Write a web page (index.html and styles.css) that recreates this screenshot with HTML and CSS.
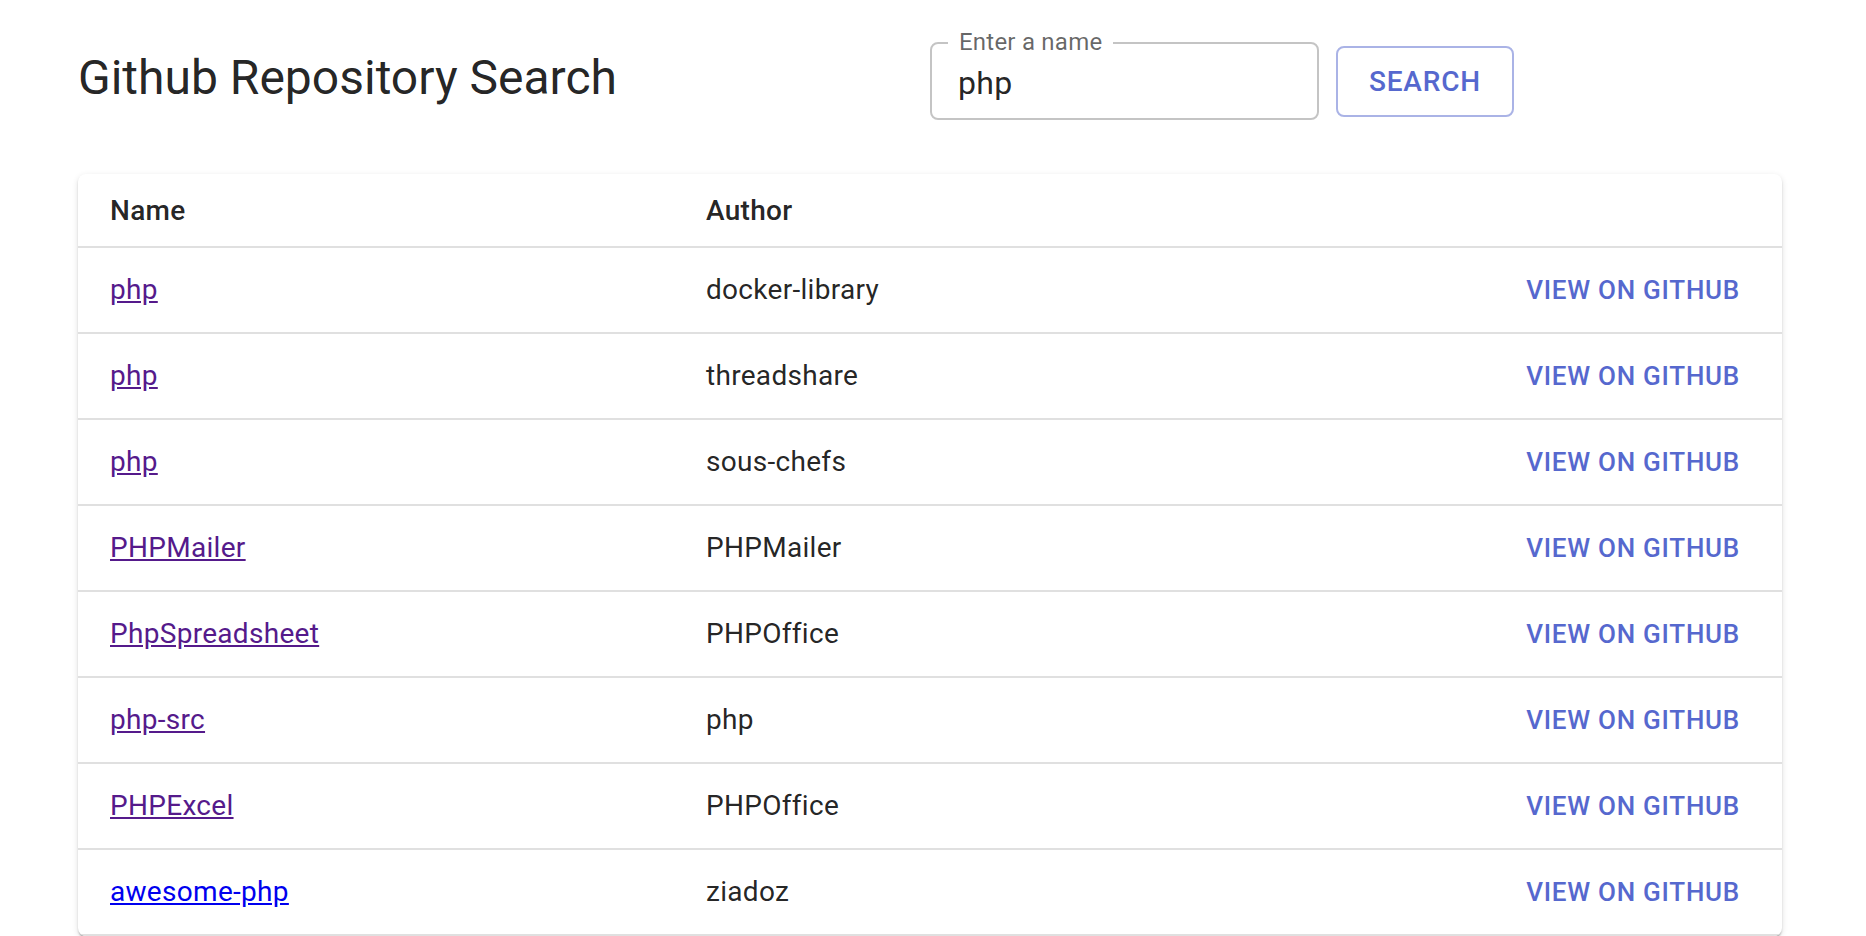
FILE: index.html
```html
<!DOCTYPE html>
<html lang="en">
<head>
<meta charset="utf-8">
<title>Github Repository Search</title>
<link rel="stylesheet" href="styles.css">
</head>
<body>
<div class="page">
  <header class="top">
    <h1 class="title">Github Repository Search</h1>
    <form class="search" onsubmit="return false">
      <div class="field">
        <label class="field-label" for="q">Enter a name</label>
        <input id="q" class="field-input" type="text" value="php">
      </div>
      <button class="btn-outlined" type="submit">Search</button>
    </form>
  </header>

  <div class="card">
    <table class="repo-table">
      <thead>
        <tr>
          <th class="col-name">Name</th>
          <th class="col-author">Author</th>
          <th class="col-action"></th>
        </tr>
      </thead>
      <tbody>
        <tr>
          <td><a class="link visited" href="#">php</a></td>
          <td>docker-library</td>
          <td class="col-action"><button class="btn-text">View on Github</button></td>
        </tr>
        <tr>
          <td><a class="link visited" href="#">php</a></td>
          <td>threadshare</td>
          <td class="col-action"><button class="btn-text">View on Github</button></td>
        </tr>
        <tr>
          <td><a class="link visited" href="#">php</a></td>
          <td>sous-chefs</td>
          <td class="col-action"><button class="btn-text">View on Github</button></td>
        </tr>
        <tr>
          <td><a class="link visited" href="#">PHPMailer</a></td>
          <td>PHPMailer</td>
          <td class="col-action"><button class="btn-text">View on Github</button></td>
        </tr>
        <tr>
          <td><a class="link visited" href="#">PhpSpreadsheet</a></td>
          <td>PHPOffice</td>
          <td class="col-action"><button class="btn-text">View on Github</button></td>
        </tr>
        <tr>
          <td><a class="link visited" href="#">php-src</a></td>
          <td>php</td>
          <td class="col-action"><button class="btn-text">View on Github</button></td>
        </tr>
        <tr>
          <td><a class="link visited" href="#">PHPExcel</a></td>
          <td>PHPOffice</td>
          <td class="col-action"><button class="btn-text">View on Github</button></td>
        </tr>
        <tr>
          <td><a class="link fresh" href="#">awesome-php</a></td>
          <td>ziadoz</td>
          <td class="col-action"><button class="btn-text">View on Github</button></td>
        </tr>
      </tbody>
    </table>
  </div>
</div>
</body>
</html>
```

FILE: styles.css
```css
html, body {
  margin: 0;
  padding: 0;
  background: #ffffff;
}

body {
  font-family: Roboto, "Helvetica", "Arial", sans-serif;
  color: rgba(0, 0, 0, 0.87);
}

.page {
  padding-left: 78px;
  width: 1704px;
}

.top {
  display: grid;
  grid-template-columns: 852px 852px;
  align-items: center;
  margin-top: 42px;
  height: 78px;
}

.title {
  margin: 0 0 6px 0;
  font-size: 48px;
  font-weight: 400;
  line-height: 1.334;
  letter-spacing: 0;
  color: rgba(0, 0, 0, 0.87);
}

.search {
  display: flex;
  align-items: center;
  gap: 17px;
  margin: 0;
}

.field {
  position: relative;
  box-sizing: border-box;
  width: 389px;
  height: 78px;
  border: 2px solid rgba(0, 0, 0, 0.23);
  border-radius: 8px;
  display: flex;
  align-items: center;
}

.field-label {
  position: absolute;
  left: 16px;
  top: -14px;
  padding: 0 11px;
  background: #ffffff;
  font-size: 24px;
  line-height: 24px;
  color: rgba(0, 0, 0, 0.6);
  letter-spacing: 0.00938em;
}

.field-input {
  box-sizing: border-box;
  width: 100%;
  height: 100%;
  border: 0;
  outline: none;
  background: transparent;
  padding: 4px 26px 0 26px;
  font-family: Roboto, "Helvetica", "Arial", sans-serif;
  font-size: 32px;
  color: rgba(0, 0, 0, 0.87);
  letter-spacing: 0.00938em;
}

.btn-outlined {
  box-sizing: border-box;
  height: 71px;
  padding: 0 31px;
  border: 2px solid rgba(86, 104, 206, 0.5);
  border-radius: 8px;
  background: transparent;
  font-family: Roboto, "Helvetica", "Arial", sans-serif;
  font-size: 28px;
  font-weight: 500;
  letter-spacing: 0.02857em;
  text-transform: uppercase;
  color: #5668ce;
  cursor: pointer;
}

.card {
  margin-top: 54px;
  width: 1704px;
  background: #ffffff;
  border-radius: 8px;
  overflow: hidden;
  box-shadow: 0 4px 2px -2px rgba(0, 0, 0, 0.2),
              0 2px 2px 0 rgba(0, 0, 0, 0.14),
              0 2px 6px 0 rgba(0, 0, 0, 0.12);
}

.repo-table {
  width: 100%;
  border-collapse: separate;
  border-spacing: 0;
  table-layout: fixed;
}

.repo-table th,
.repo-table td {
  box-sizing: border-box;
  padding: 12px 48px 12px 32px;
  border-bottom: 2px solid #e0e0e0;
  text-align: left;
  vertical-align: middle;
  font-size: 28px;
  letter-spacing: 0.01071em;
  color: rgba(0, 0, 0, 0.87);
}

.repo-table th {
  font-weight: 500;
  line-height: 48px;
  padding-top: 13px;
  padding-bottom: 11px;
}

.repo-table td {
  font-weight: 400;
  line-height: 40px;
}

.col-name {
  width: 596px;
}

.col-action {
  width: 320px;
}

.repo-table th.col-action,
.repo-table td.col-action {
  text-align: right;
  padding-right: 32px;
}

.link {
  text-decoration: underline;
}

.link.visited {
  color: #551a8b;
}

.link.fresh {
  color: #0000ee;
}

.btn-text {
  height: 60px;
  padding: 0 10px;
  border: 0;
  background: transparent;
  font-family: Roboto, "Helvetica", "Arial", sans-serif;
  font-size: 26px;
  font-weight: 500;
  line-height: 44px;
  letter-spacing: 0.02857em;
  text-transform: uppercase;
  color: #5668ce;
  cursor: pointer;
  vertical-align: middle;
}
```
